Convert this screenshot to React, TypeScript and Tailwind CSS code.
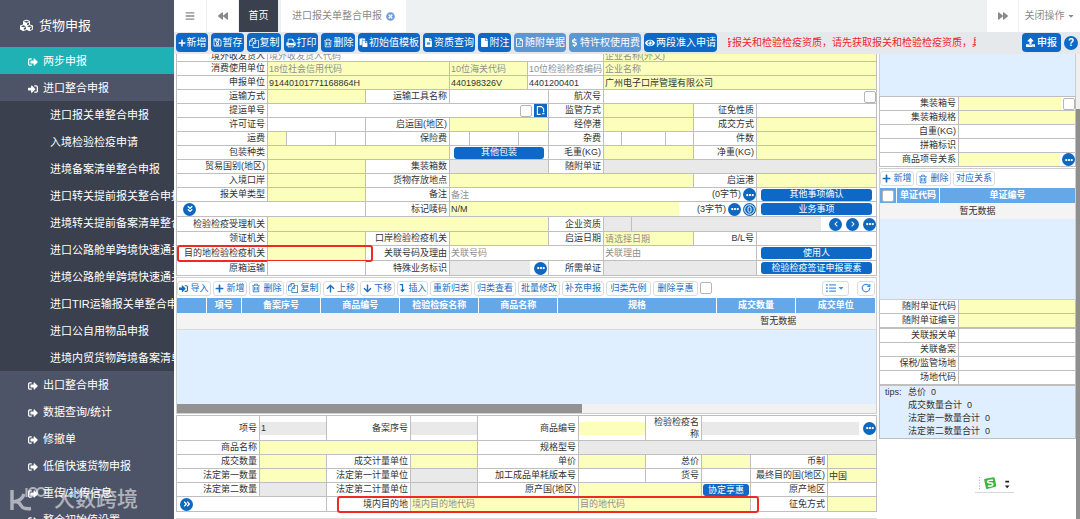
import type { ReactNode } from "react";
import {
  FaAngleDoubleDown,
  FaAngleDoubleRight,
  FaArrowDown,
  FaArrowUp,
  FaBackward,
  FaBars,
  FaCaretDown,
  FaChevronLeft,
  FaChevronRight,
  FaCubes,
  FaDollarSign,
  FaEllipsisH,
  FaEye,
  FaFile,
  FaFileAlt,
  FaForward,
  FaLevelDownAlt,
  FaListUl,
  FaPaste,
  FaPlus,
  FaRegFilePdf,
  FaRegSave,
  FaSignInAlt,
  FaSignOutAlt,
  FaTimesCircle,
  FaUpload,
} from "react-icons/fa";
import { RotateCw } from "lucide-react";

/* ---------- icons ---------- */

function Glyph({ d }: { d: string }) {
  return (
    <svg viewBox="0 0 1792 1792" className="size-[10px] shrink-0 fill-current" aria-hidden="true">
      <path d={d} />
    </svg>
  );
}

const CopyIcon = () => (
  <Glyph d="M1696 384q40 0 68 28t28 68v1216q0 40-28 68t-68 28h-960q-40 0-68-28t-28-68v-288h-544q-40 0-68-28t-28-68v-672q0-40 20-88t48-76l408-408q28-28 76-48t88-20h416q40 0 68 28t28 68v328q68-40 128-40h416zm-544 213l-299 299h299v-299zm-640-384l-299 299h299v-299zm196 647l316-316v-416h-384v416q0 40-28 68t-68 28h-416v640h512v-256q0-40 20-88t48-76zm956 804v-1152h-384v416q0 40-28 68t-68 28h-416v640h896z" />
);

const PrintIcon = () => (
  <Glyph d="M448 1536h896v-256h-896v256zm0-640h896v-384h-160q-40 0-68-28t-28-68v-160h-640v640zm1152 64q0-26-19-45t-45-19-45 19-19 45 19 45 45 19 45-19 19-45zm128 0v416q0 13-9.5 22.5t-22.5 9.5h-224v160q0 40-28 68t-68 28h-960q-40 0-68-28t-28-68v-160h-224q-13 0-22.5-9.5t-9.5-22.5v-416q0-79 56.5-135.5t135.5-56.5h64v-544q0-40 28-68t68-28h672q40 0 88 20t76 48l152 152q28 28 48 76t20 88v256h64q79 0 135.5 56.5t56.5 135.5z" />
);

const TrashIcon = () => (
  <Glyph d="M704 736v576q0 14-9 23t-23 9h-64q-14 0-23-9t-9-23v-576q0-14 9-23t23-9h64q14 0 23 9t9 23zm256 0v576q0 14-9 23t-23 9h-64q-14 0-23-9t-9-23v-576q0-14 9-23t23-9h64q14 0 23 9t9 23zm256 0v576q0 14-9 23t-23 9h-64q-14 0-23-9t-9-23v-576q0-14 9-23t23-9h64q14 0 23 9t9 23zm128 724v-948h-896v948q0 22 7 40.5t14.5 27 10.5 8.5h832q3 0 10.5-8.5t14.5-27 7-40.5zm-672-1076h448l-48-117q-7-9-17-11h-317q-10 2-17 11zm928 32v64q0 14-9 23t-23 9h-96v948q0 83-47 143.5t-113 60.5h-832q-66 0-113-58.5t-47-141.5v-952h-96q-14 0-23-9t-9-23v-64q0-14 9-23t23-9h309l70-167q15-37 54-63t79-26h320q40 0 79 26t54 63l70 167h309q14 0 23 9t9 23z" />
);

/* ---------- shared pieces ---------- */

type Tone = "y" | "g" | "w";

const TONES: Record<Tone, string> = {
  y: "bg-[#fbffbb]",
  g: "bg-[#e9e9e9]",
  w: "bg-white",
};

interface InProps {
  name: string;
  tone?: Tone;
  span?: string;
  hint?: string;
  value?: string;
}

function Box({ name, tone = "w", span = "flex-1", hint, value }: InProps) {
  return (
    <input
      id={name}
      aria-label={name}
      placeholder={hint}
      defaultValue={value}
      className={`h-full min-w-0 pl-px outline-none placeholder:text-[#8f8f8f] ${TONES[tone]} ${span}`}
    />
  );
}

function Cell({ span = "", children }: { span?: string; children?: ReactNode }) {
  return (
    <div className={`flex min-w-0 items-center border-r border-b border-[#bfbfbf] ${span}`}>{children}</div>
  );
}

function In({ span = "", ...rest }: InProps) {
  return (
    <Cell span={span}>
      <Box {...rest} />
    </Cell>
  );
}

function Lab({ text, name, wrap = false }: { text: string; name?: string; wrap?: boolean }) {
  return (
    <label
      htmlFor={name ?? text}
      className={`flex min-w-0 items-center justify-end border-r border-b border-[#bfbfbf] pr-0.5 text-right ${
        wrap ? "leading-3" : "whitespace-nowrap"
      }`}
    >
      {text}
    </label>
  );
}

/* Label followed by its text box. */
function F({ label, ...rest }: { label: string } & Omit<InProps, "name">) {
  return (
    <>
      <Lab text={label} />
      <In name={label} {...rest} />
    </>
  );
}

function Triple({ label, tone, span = "" }: { label: string; tone: Tone; span?: string }) {
  return (
    <>
      <Lab text={label} />
      <Cell span={span}>
        <Box name={label} tone={tone} span="w-1/5 border-r border-[#bfbfbf]" />
        <Box name={`${label}数值`} span="w-1/2 border-r border-[#bfbfbf]" />
        <Box name={`${label}币制`} />
      </Cell>
    </>
  );
}

function Round({ label, children }: { label: string; children: ReactNode }) {
  return (
    <button
      type="button"
      aria-label={label}
      className="flex size-[13px] shrink-0 items-center justify-center rounded-full bg-[#0f68c0] text-[8px] text-white"
    >
      {children}
    </button>
  );
}

const More = ({ label }: { label: string }) => (
  <Round label={label}>
    <FaEllipsisH />
  </Round>
);

function Pill({ children }: { children: ReactNode }) {
  return (
    <button
      type="button"
      className="mx-1 flex h-3 flex-1 items-center justify-center rounded-[3px] bg-[#0d69c5] whitespace-nowrap text-white"
    >
      {children}
    </button>
  );
}

function Tick({ label }: { label: string }) {
  return (
    <input
      type="checkbox"
      aria-label={label}
      className="size-3 shrink-0 appearance-none rounded-[2px] border border-[#b5b5b5] bg-white"
    />
  );
}

function Ghost({ w, icon, children }: { w: string; icon?: ReactNode; children: ReactNode }) {
  return (
    <button
      type="button"
      className={`flex h-[15px] shrink-0 items-center justify-center gap-0.5 rounded-[3px] border border-[#dcdcdc] bg-white whitespace-nowrap text-[#1a6cc0] ${w}`}
    >
      {icon}
      {children}
    </button>
  );
}

const MAIN_GRID = "relative grid grid-cols-[91fr_98fr_84fr_78fr_21fr_55fr_90fr_63fr_120fr]";
const ITEM_GRID = "relative grid grid-cols-[83fr_67fr_84fr_67fr_101fr_67fr_56fr_49fr_77fr_49fr]";
const SIDE_GRID = "grid h-[14px] grid-cols-[79fr_117fr]";

function Row({ tall = false, children }: { tall?: boolean; children: ReactNode }) {
  return <div className={`${MAIN_GRID} ${tall ? "h-[15px]" : "h-[14px]"}`}>{children}</div>;
}

function ItemRow({ h = "h-[14px]", children }: { h?: string; children: ReactNode }) {
  return <div className={`${ITEM_GRID} ${h}`}>{children}</div>;
}

/* ---------- sidebar ---------- */

const SUB = [
  "进口报关单整合申报",
  "入境检验检疫申请",
  "进境备案清单整合申报",
  "进口转关提前报关整合申报",
  "进境转关提前备案清单整合申报",
  "进口公路舱单跨境快速通关",
  "进境公路舱单跨境快速通关",
  "进口TIR运输报关单整合申报",
  "进口公自用物品申报",
  "进境内贸货物跨境备案清单",
];

const REST = ["出口整合申报", "数据查询/统计", "修撤单", "低值快速货物申报", "重传/补传信息", "整合初始值设置"];

const NAV = "flex h-[27px] items-center gap-[5px] pt-0.5 pl-7 whitespace-nowrap";

function Sidebar() {
  return (
    <nav className="relative h-full w-[174px] shrink-0 overflow-hidden bg-[#4d5467] text-[11px] text-white">
      <div className="flex h-[47px] items-center gap-1.5 pt-[3px] pl-5 text-[13px]">
        <FaCubes />
        货物申报
      </div>
      <a href="#two-step" className={`${NAV} bg-[#1fb1b3]`}>
        <FaSignOutAlt className="size-[10px]" />
        两步申报
      </a>
      <a href="#import" className={NAV}>
        <FaSignInAlt className="size-[10px]" />
        进口整合申报
      </a>
      <ul className="bg-[#3a404d]">
        {SUB.map((t) => (
          <li key={t}>
            <a href="#sub" className="flex h-[27px] items-center overflow-hidden pt-0.5 pl-[50px] whitespace-nowrap">
              {t}
            </a>
          </li>
        ))}
      </ul>
      {REST.map((t) => (
        <a key={t} href="#rest" className={NAV}>
          <FaSignOutAlt className="size-[10px]" />
          {t}
        </a>
      ))}
      <div className="absolute bottom-1.5 left-2.5 flex items-center gap-1.5 text-[21px] leading-7 font-medium text-white/55">
        <svg viewBox="0 0 38 26" className="h-[26px] w-[38px]" fill="none" stroke="currentColor">
          <path d="M2 4v20M3 16q9-1 11-8M5 15.500q4 0 6 4t10 3" strokeWidth="3.400" />
          <path d="M16.500 2v9" strokeWidth="2.200" />
          <circle cx="23" cy="6" r="4" strokeWidth="2.200" />
          <circle cx="31" cy="6" r="4" strokeWidth="2.200" />
        </svg>
        大数跨境
      </div>
    </nav>
  );
}

/* ---------- top bars ---------- */

function TabBar() {
  return (
    <header className="flex h-8 shrink-0 gap-px bg-[#edf1f2] text-[10px] text-[#8a8a8a]">
      <button type="button" aria-label="菜单" className="flex w-8 items-center justify-center bg-white">
        <FaBars className="size-[10px]" />
      </button>
      <button type="button" aria-label="向左" className="flex w-[31px] items-center justify-center bg-white">
        <FaBackward className="size-[10px]" />
      </button>
      <button type="button" className="w-[39px] bg-[#3a404d] text-white">
        首页
      </button>
      <button type="button" className="ml-0.5 flex w-[125px] items-center justify-center gap-1 bg-white">
        进口报关单整合申报
        <FaTimesCircle className="size-[9px] text-[#6f9bd6]" />
      </button>
      <div className="flex-1" />
      <button type="button" aria-label="向右" className="flex w-[31px] items-center justify-center bg-white">
        <FaForward className="size-[10px]" />
      </button>
      <button type="button" className="flex w-[61px] items-center justify-center gap-0.5 bg-white">
        关闭操作
        <FaCaretDown className="size-2" />
      </button>
    </header>
  );
}

const TOOLS: { t: string; w: string; icon: ReactNode; off?: boolean }[] = [
  { t: "新增", w: "w-8", icon: <FaPlus className="size-2" /> },
  { t: "暂存", w: "w-[33px]", icon: <FaRegSave className="size-[9px]" /> },
  { t: "复制", w: "w-[34px]", icon: <CopyIcon /> },
  { t: "打印", w: "w-[34px]", icon: <PrintIcon /> },
  { t: "删除", w: "w-[34px]", icon: <TrashIcon /> },
  { t: "初始值模板", w: "w-[62px]", icon: <FaPaste className="size-[9px]" /> },
  { t: "资质查询", w: "w-[52px]", icon: <FaFileAlt className="size-[9px]" /> },
  { t: "附注", w: "w-[33px]", icon: <FaFile className="size-[9px]" /> },
  { t: "随附单据", w: "w-[52px]", icon: <FaRegFilePdf className="size-[9px]" />, off: true },
  { t: "特许权使用费", w: "w-[72px]", icon: <FaDollarSign className="size-[9px]" />, off: true },
  { t: "两段准入申请", w: "w-[73px]", icon: <FaEye className="size-[10px]" /> },
];

function ToolBar() {
  return (
    <div className="flex h-[22px] shrink-0 items-start gap-[3px] bg-[#e5e9ec] px-0.5 pt-px text-[10px]">
      {TOOLS.map((b) => (
        <button
          key={b.t}
          type="button"
          className={`flex h-[19px] shrink-0 items-center justify-center gap-px rounded-[4px] whitespace-nowrap text-white ${
            b.off ? "bg-[#5b98d3]" : "bg-[#0d69c5]"
          } ${b.w}`}
        >
          {b.icon}
          {b.t}
        </button>
      ))}
      <div className="ml-2 flex w-[248px] justify-center overflow-hidden leading-[19px] whitespace-nowrap text-[#f0262b]">
        备报关和检验检疫资质，请先获取报关和检验检疫资质，具
      </div>
      <button
        type="button"
        className="ml-auto flex h-[19px] w-[39px] items-center justify-center gap-0.5 rounded-[4px] bg-[#0d69c5] font-medium text-white"
      >
        <FaUpload className="size-[9px]" />
        申报
      </button>
      <button
        type="button"
        aria-label="帮助"
        className="mt-[3px] size-[14px] rounded-full bg-[#0d69c5] leading-[14px] font-bold text-white"
      >
        ?
      </button>
    </div>
  );
}

/* ---------- declaration form ---------- */

function HeadForm() {
  return (
    <section className="border-l border-[#bfbfbf] bg-white">
      <div className={`${MAIN_GRID} h-2 overflow-hidden`}>
        <div className="flex h-2 items-end justify-end border-r border-b border-[#bfbfbf] pr-0.5 leading-[10px]">
          境外收发货人
        </div>
        <div className="col-span-5 flex h-2 items-end border-r border-b border-[#bfbfbf] pl-px leading-[10px] text-[#8f8f8f]">
          境外收发货人代码
        </div>
        <div className="col-span-3 flex h-2 items-end border-r border-b border-[#bfbfbf] bg-[#fbffbb] pl-px leading-[10px] text-[#8f8f8f]">
          企业名称(外文)
        </div>
      </div>
      <Row>
        <F label="消费使用单位" tone="y" hint="18位社会信用代码" span="col-span-2" />
        <In name="消费使用单位海关代码" tone="y" hint="10位海关代码" />
        <In name="消费使用单位检验检疫编码" hint="10位检验检疫编码" span="col-span-2" />
        <In name="消费使用单位企业名称" tone="y" hint="企业名称" span="col-span-3" />
      </Row>
      <Row>
        <F label="申报单位" tone="y" value="91440101771168864H" span="col-span-2" />
        <In name="申报单位海关代码" tone="y" value="440198326V" />
        <In name="申报单位检验检疫编码" value="4401200401" span="col-span-2" />
        <In name="申报单位企业名称" tone="y" value="广州电子口岸管理有限公司" span="col-span-3" />
      </Row>
      <Row>
        <F label="运输方式" tone="y" />
        <F label="运输工具名称" span="col-span-2" />
        <Lab text="航次号" />
        <Cell span="col-span-3">
          <Box name="航次号" />
          <Tick label="航次号确认" />
        </Cell>
      </Row>
      <Row>
        <Lab text="提运单号" />
        <Cell span="col-span-4 gap-0.5">
          <Box name="提运单号" />
          <Tick label="提运单号确认" />
          <button
            type="button"
            aria-label="提运单号查询"
            className="mr-px flex size-[13px] items-center justify-center bg-[#0d69c5] text-white"
          >
            <svg viewBox="0 0 12 12" className="size-[11px]" fill="none" stroke="currentColor" strokeWidth="1.2">
              <path d="M6 10.2H2.6V1.8h4.6l2.2 2.4v3.6M7.6 9.6h2.8" />
            </svg>
          </button>
        </Cell>
        <F label="监管方式" tone="y" />
        <F label="征免性质" />
      </Row>
      <Row>
        <F label="许可证号" />
        <F label="启运国(地区)" tone="y" span="col-span-2" />
        <F label="经停港" tone="y" />
        <F label="成交方式" tone="y" />
      </Row>
      <Row>
        <Triple label="运费" tone="y" />
        <Triple label="保险费" tone="w" span="col-span-2" />
        <Triple label="杂费" tone="w" />
        <F label="件数" tone="y" />
      </Row>
      <Row>
        <F label="包装种类" tone="y" span="col-span-2" />
        <Cell span="col-span-2">
          <Pill>其他包装</Pill>
        </Cell>
        <F label="毛重(KG)" tone="y" />
        <F label="净重(KG)" tone="y" />
      </Row>
      <Row>
        <F label="贸易国别(地区)" tone="y" />
        <F label="集装箱数" tone="g" span="col-span-2" />
        <F label="随附单证" tone="g" span="col-span-3" />
      </Row>
      <Row>
        <F label="入境口岸" tone="y" />
        <F label="货物存放地点" tone="y" span="col-span-4" />
        <F label="启运港" tone="y" />
      </Row>
      <Row>
        <F label="报关单类型" tone="y" />
        <Lab text="备注" />
        <Cell span="col-span-5 gap-0.5">
          <Box name="备注" hint="备注" />
          (0字节)
          <More label="备注更多" />
        </Cell>
        <Cell>
          <Pill>其他事项确认</Pill>
        </Cell>
      </Row>
      <Row tall>
        <Cell span="col-span-2 pl-1.5">
          <Round label="展开">
            <FaAngleDoubleDown />
          </Round>
        </Cell>
        <Lab text="标记唛码" />
        <Cell span="col-span-5 gap-0.5">
          <Box name="标记唛码" tone="y" value="N/M" />
          <span className="pl-4">(3字节)</span>
          <More label="标记唛码更多" />
          <Round label="附件">
            <svg viewBox="0 0 13 13" className="size-[13px]" fill="none" stroke="currentColor">
              <circle cx="6.5" cy="6.5" r="4.8" />
              <rect x="5" y="3.8" width="3" height="5.4" rx="1.5" />
            </svg>
          </Round>
        </Cell>
        <Cell>
          <Pill>业务事项</Pill>
        </Cell>
      </Row>
      <Row tall>
        <F label="检验检疫受理机关" tone="y" span="col-span-4" />
        <Lab text="企业资质" />
        <Cell span="col-span-3 gap-1">
          <Box name="企业资质" tone="g" span="w-7 border-r border-[#bfbfbf]" />
          <Box name="企业资质名称" tone="g" span="-ml-1 mr-1 flex-1" />
          <Round label="上一条">
            <FaChevronLeft className="size-[6px]" />
          </Round>
          <Round label="下一条">
            <FaChevronRight className="size-[6px]" />
          </Round>
          <More label="企业资质更多" />
        </Cell>
      </Row>
      <Row>
        <F label="领证机关" tone="y" />
        <F label="口岸检验检疫机关" tone="y" span="col-span-2" />
        <F label="启运日期" tone="y" hint="请选择日期" />
        <F label="B/L号" />
      </Row>
      <Row tall>
        <F label="目的地检验检疫机关" tone="y" />
        <F label="关联号码及理由" hint="关联号码" span="col-span-3" />
        <In name="关联理由" hint="关联理由" span="col-span-2" />
        <Cell>
          <Pill>使用人</Pill>
        </Cell>
        <div className="pointer-events-none absolute -inset-y-px left-0 w-[28%] rounded-[3px] border-2 border-[#ee2b22]" />
      </Row>
      <Row tall>
        <F label="原箱运输" />
        <Lab text="特殊业务标识" />
        <Cell span="col-span-2 gap-1 pr-px">
          <Box name="特殊业务标识" tone="g" />
          <More label="特殊业务标识更多" />
        </Cell>
        <F label="所需单证" tone="g" span="col-span-2" />
        <Cell>
          <Pill>检验检疫签证申报要素</Pill>
        </Cell>
      </Row>
    </section>
  );
}

const GHOSTS: { t: string; w: string; icon?: ReactNode }[] = [
  { t: "导入", w: "w-[34px]", icon: <FaSignInAlt /> },
  { t: "新增", w: "w-[34px]", icon: <FaPlus /> },
  { t: "删除", w: "w-[35px]", icon: <TrashIcon /> },
  { t: "复制", w: "w-[35px]", icon: <CopyIcon /> },
  { t: "上移", w: "w-[35px]", icon: <FaArrowUp /> },
  { t: "下移", w: "w-[35px]", icon: <FaArrowDown /> },
  { t: "插入", w: "w-[31px]", icon: <FaLevelDownAlt className="size-2" /> },
  { t: "重新归类", w: "w-[42px]" },
  { t: "归类查看", w: "w-[42px]" },
  { t: "批量修改", w: "w-[42px]" },
  { t: "补充申报", w: "w-[42px]" },
  { t: "归类先例", w: "w-[45px]" },
  { t: "删除享惠", w: "w-[45px]" },
];

const COLS: { t: string; w: string }[] = [
  { t: "", w: "w-[4.2%]" },
  { t: "项号", w: "w-[5%]" },
  { t: "备案序号", w: "w-[11.4%]" },
  { t: "商品编号", w: "w-[11.3%]" },
  { t: "检验检疫名称", w: "w-[11.3%]" },
  { t: "商品名称", w: "w-[11.3%]" },
  { t: "规格", w: "w-[22.7%]" },
  { t: "成交数量", w: "w-[11.4%]" },
  { t: "成交单位", w: "w-[11.4%]" },
];

function Goods() {
  return (
    <section className="mt-px border border-[#cfcfcf] bg-white">
      <div className="flex h-5 items-center gap-0.5">
        {GHOSTS.map((g) => (
          <Ghost key={g.t} w={g.w} icon={g.icon}>
            {g.t}
          </Ghost>
        ))}
        <Tick label="全部享惠" />
        <div className="ml-auto flex gap-2 pr-px">
          <button
            type="button"
            aria-label="列设置"
            className="flex h-[15px] w-[27px] items-center justify-center gap-px rounded-[3px] border border-[#dcdcdc] text-[#4a93dc]"
          >
            <FaListUl className="size-[10px]" />
            <FaCaretDown className="size-2" />
          </button>
          <button
            type="button"
            aria-label="刷新"
            className="flex h-[15px] w-[18px] items-center justify-center rounded-[3px] border border-[#dcdcdc] text-[#4a93dc]"
          >
            <RotateCw className="size-[10px]" strokeWidth={3} />
          </button>
        </div>
      </div>
      <table className="w-full table-fixed border-collapse">
        <thead>
          <tr className="h-[15px] bg-[#66a7e8] text-white">
            {COLS.map((c) => (
              <th key={c.t} className={`border-r border-white p-0 leading-[15px] ${c.w}`}>
                {c.t}
              </th>
            ))}
          </tr>
        </thead>
        <tbody>
          <tr className="h-4 bg-[#f4f4f4]">
            <td colSpan={9} className="p-0 leading-4">
              <div className="pl-[83.5%] whitespace-nowrap">暂无数据</div>
            </td>
          </tr>
        </tbody>
      </table>
      <div className="h-[75px] border-t border-[#dcdcdc] bg-[#dfefff]" />
      <div className="h-[9px] bg-[#f1f1f1]">
        <div className="h-full w-[58%] bg-[#929292]" />
      </div>
    </section>
  );
}

function ItemForm() {
  return (
    <section className="mt-px border-t border-l border-[#bfbfbf] bg-white">
      <ItemRow h="h-[25px]">
        <Lab text="项号" />
        <Cell>
          <Box name="项号" tone="g" value="1" span="max-h-[13px] flex-1" />
        </Cell>
        <Lab text="备案序号" />
        <Cell>
          <Box name="备案序号" tone="g" span="max-h-[13px] flex-1" />
        </Cell>
        <Lab text="商品编号" />
        <Cell>
          <Box name="商品编号" tone="y" span="max-h-[13px] flex-1" />
        </Cell>
        <Lab text="检验检疫名称" wrap />
        <Cell span="col-span-3 gap-1">
          <Box name="检验检疫名称" tone="g" span="max-h-[13px] flex-1" />
          <More label="检验检疫名称更多" />
        </Cell>
      </ItemRow>
      <ItemRow>
        <F label="商品名称" tone="y" span="col-span-3" />
        <F label="规格型号" tone="g" span="col-span-5" />
      </ItemRow>
      <ItemRow>
        <F label="成交数量" tone="y" />
        <F label="成交计量单位" tone="y" />
        <F label="单价" tone="y" />
        <F label="总价" tone="y" />
        <F label="币制" tone="y" />
      </ItemRow>
      <ItemRow>
        <F label="法定第一数量" tone="y" />
        <F label="法定第一计量单位" tone="g" />
        <F label="加工成品单耗版本号" />
        <F label="货号" />
        <F label="最终目的国(地区)" tone="y" value="中国" />
      </ItemRow>
      <ItemRow>
        <F label="法定第二数量" tone="g" />
        <F label="法定第二计量单位" tone="g" />
        <F label="原产国(地区)" tone="y" span="col-span-2" />
        <Cell>
          <button
            type="button"
            className="mx-px h-3 flex-1 rounded-[3px] bg-[#0d69c5] leading-3 whitespace-nowrap text-white"
          >
            协定享惠
          </button>
        </Cell>
        <F label="原产地区" />
      </ItemRow>
      <ItemRow h="h-[15px]">
        <Cell span="col-span-2 pl-[3px]">
          <Round label="更多字段">
            <FaAngleDoubleRight />
          </Round>
        </Cell>
        <F label="境内目的地" tone="y" hint="境内目的地代码" span="col-span-2" />
        <In name="目的地代码" tone="y" hint="目的地代码" span="col-span-3" />
        <F label="征免方式" tone="y" />
        <div className="pointer-events-none absolute -inset-y-px left-[22.8%] w-[60.4%] rounded-[3px] border-2 border-[#ee2b22]" />
      </ItemRow>
    </section>
  );
}

/* ---------- right column ---------- */

function SideRow({ label, tone = "w", extra }: { label: string; tone?: Tone; extra?: ReactNode }) {
  return (
    <div className={SIDE_GRID}>
      <Lab text={label} />
      <Cell span={extra ? "gap-0.5" : ""}>
        <Box name={label} tone={tone} />
        {extra}
      </Cell>
    </div>
  );
}

function SidePanel() {
  return (
    <aside className="min-w-0 flex-[197]">
      <div className="h-[42px] border-x border-[#cfcfcf] bg-[#dfefff]" />
      <section className="border-t border-l border-[#bfbfbf] bg-white">
        <SideRow label="集装箱号" tone="y" extra={<Tick label="集装箱号确认" />} />
        <SideRow label="集装箱规格" tone="y" />
        <SideRow label="自重(KG)" />
        <SideRow label="拼箱标识" />
        <SideRow label="商品项号关系" tone="y" extra={<More label="商品项号关系更多" />} />
      </section>
      <section className="mt-px border border-[#cfcfcf] bg-white">
        <div className="flex h-[19px] items-center gap-0.5">
          <Ghost w="w-[34px]" icon={<FaPlus />}>
            新增
          </Ghost>
          <Ghost w="w-[35px]" icon={<TrashIcon />}>
            删除
          </Ghost>
          <Ghost w="w-[42px]">对应关系</Ghost>
        </div>
        <table className="w-full table-fixed border-collapse">
          <thead>
            <tr className="h-[15px] bg-[#66a7e8] text-white">
              <th className="w-[8.5%] border-r border-white p-0">
                <div className="flex justify-center">
                  <Tick label="全选" />
                </div>
              </th>
              <th className="w-[22%] border-r border-white p-0 leading-[15px] whitespace-nowrap">单证代码</th>
              <th className="p-0 leading-[15px]">单证编号</th>
            </tr>
          </thead>
          <tbody>
            <tr className="h-4 bg-[#f4f4f4]">
              <td colSpan={3} className="p-0 text-center leading-4">
                暂无数据
              </td>
            </tr>
          </tbody>
        </table>
        <div className="h-20 bg-[#dfefff]" />
      </section>
      <section className="border-l border-[#bfbfbf] bg-white">
        <SideRow label="随附单证代码" tone="y" />
        <SideRow label="随附单证编号" tone="y" />
      </section>
      <section className="border-t border-l border-[#bfbfbf] bg-white">
        <SideRow label="关联报关单" />
        <SideRow label="关联备案" />
        <SideRow label="保税/监管场地" />
        <SideRow label="场地代码" />
      </section>
      <section className="grid grid-cols-[23px_1fr] border border-[#bfbfbf] bg-[#dfefff] pl-[5px] leading-[13px]">
        <span>tips:</span>
        <ul>
          <li>总价&nbsp; 0</li>
          <li>成交数量合计&nbsp; 0</li>
          <li>法定第一数量合计&nbsp; 0</li>
          <li>法定第二数量合计&nbsp; 0</li>
        </ul>
      </section>
    </aside>
  );
}

function ImeBar() {
  return (
    <div className="absolute right-[66px] bottom-[26px] flex h-[17px] w-[39px] border-b border-[#d8d8d8] bg-white">
      <svg viewBox="0 0 39 17" className="h-full w-full" fill="none">
        <path d="M3.5 1v15" stroke="#9a9a9a" strokeDasharray="1 2" />
        <path d="M8.5 4q0-1 1-1.200l9-1.600q1 0 1.200 1l1.600 8q0 1-1 1.300l-8.600 2.300q-1 .2-1.300-.8z" fill="#3db63f" />
        <path
          d="M18 4.600q-5.500-.6-5.800 1.400 0 1.500 2.600 1.400 3-.2 2.900 1.600-.4 2.300-5.200 1.600"
          stroke="white"
          strokeWidth="1.6"
        />
        <path d="M31 5h4v2h-4zM30.5 10h5l-2.500 3z" fill="#222" />
      </svg>
    </div>
  );
}

export default function App() {
  return (
    <div className="flex h-screen overflow-hidden bg-white font-['Liberation_Sans','Noto_Sans_CJK_SC',sans-serif] text-[9px] leading-none text-[#333]">
      <Sidebar />
      <div className="relative flex min-w-0 flex-1 flex-col">
        <TabBar />
        <ToolBar />
        <main className="flex min-h-0 flex-1 overflow-hidden pl-0.5">
          <div className="min-w-0 flex-[701]">
            <HeadForm />
            <Goods />
            <ItemForm />
            <div className="mt-1.5 border-t border-[#dcdcdc]" />
          </div>
          <div className="w-0.5 shrink-0" />
          <SidePanel />
          <div className="w-1 shrink-0 bg-[#efefef] pt-[55px]">
            <div className="h-full bg-[#8f8f8f]" />
          </div>
        </main>
        <ImeBar />
      </div>
    </div>
  );
}
